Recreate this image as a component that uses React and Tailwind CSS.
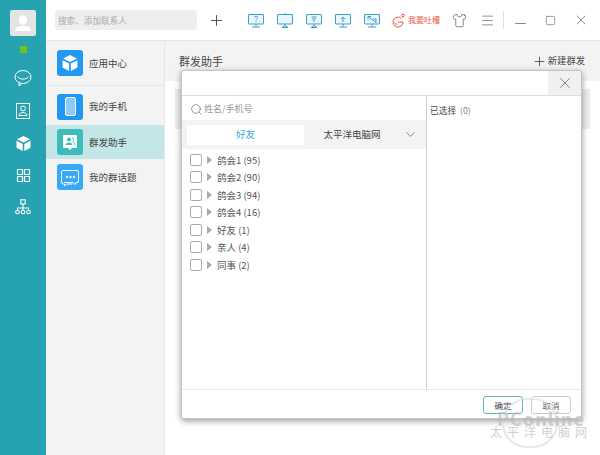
import React from 'react';
import { Plus, Search, ChevronDown, X, Minus, Square, Menu, Shirt } from 'lucide-react';

const font = { fontFamily: '"Noto Sans CJK SC", "Liberation Sans", sans-serif' };

const Monitor = ({ children, plain }) => (
  <svg width="16" height="15" viewBox="0 0 16 15" fill="none" stroke="#3a9fc6" strokeWidth="1">
    <rect x="0.500" y="1.500" width="15" height="9.500" rx="0.500" fill="#eaf6fb" />
    {plain ? null : <path d="M8 11v3M4 14h8" />}
    {children}
  </svg>
);

const toolIcons = [
  <Monitor key="a"><path d="M6.500 4.500c0-1.800 3-1.800 3 0 0 1.200-1.500 1.200-1.500 2.500M8 8v1" /></Monitor>,
  <Monitor key="b" plain><path d="M8 0v1.500M8 11v2M5 14.500l3-2 3 2z" /></Monitor>,
  <Monitor key="c" plain><path d="M5.500 4h5M6 6h4M7 8h2M8 11v2M5 14.500l3-2 3 2z" /></Monitor>,
  <Monitor key="d"><path d="M8 9V4M6 6l2-2 2 2" /></Monitor>,
  <Monitor key="e"><path d="M4 3.500l8 6M4 3.500h3M4 3.500v3M9 6h3v3.500" /></Monitor>,
];

const groups = ['鸽会1 (95)', '鸽会2 (90)', '鸽会3 (94)', '鸽会4 (16)', '好友 (1)', '亲人 (4)', '同事 (2)'];

// the cube used in the rail and in the app center tile
const Cube = ({ size = 17 }) => (
  <svg width={size} height={size} viewBox="0 0 17 17" fill="white">
    <path d="M8.500 1 15 4.300 8.500 7.600 2 4.300z" />
    <path d="M1.500 5.800 7.700 9v7L1.500 12.800z" />
    <path d="M15.500 5.800 9.300 9v7l6.200-3.200z" />
  </svg>
);

const App = () => {
  return (
    <div className="w-[600px] h-[455px] flex relative overflow-hidden bg-white" style={font}>
      <aside className="w-[46px] bg-[#26a2b1] flex flex-col items-center shrink-0 pt-[10px]">
        <div className="w-[26px] h-[26px] bg-[#e4e4e4] rounded-[2px] flex items-center justify-center">
          <svg width="20" height="20" viewBox="0 0 20 20" fill="white">
            <ellipse cx="10" cy="7" rx="4" ry="4.800" />
            <path d="M2 18c0-4 4-5 8-5s8 1 8 5z" />
          </svg>
        </div>
        <div className="w-[7px] h-[7px] bg-[#6fc41c] mt-[10px]"></div>
        <div className="mt-[16px] flex flex-col items-center gap-[16px] text-white">
          <svg width="18" height="18" viewBox="0 0 18 18" fill="none" stroke="white" strokeWidth="1">
            <ellipse cx="9" cy="8" rx="8" ry="6.500" />
            <path d="M3.500 7.500c2 3.500 9 3.500 11 0M5 14v3l3-2.500" />
          </svg>
          <svg width="16" height="16" viewBox="0 0 16 16" fill="none" stroke="white" strokeWidth="1">
            <rect x="1.500" y="0.500" width="13" height="15" />
            <circle cx="8" cy="5.500" r="2.400" />
            <path d="M4 12.500c0-4 8-4 8 0z" />
          </svg>
          <Cube />
          <svg width="15" height="15" viewBox="0 0 15 15" fill="none" stroke="white" strokeWidth="1.200">
            <rect x="1.500" y="1.500" width="5" height="5" rx="0.500" />
            <rect x="8.500" y="1.500" width="5" height="5" rx="0.500" />
            <rect x="1.500" y="8.500" width="5" height="5" rx="0.500" />
            <rect x="8.500" y="8.500" width="5" height="5" rx="0.500" />
          </svg>
          <svg width="16" height="16" viewBox="0 0 16 16" fill="none" stroke="white" strokeWidth="1.100">
            <rect x="5.800" y="0.800" width="4.400" height="4.200" />
            <path d="M8 5v4M2.500 11V9h11v2M8 9v2" />
            <circle cx="2.500" cy="13" r="1.800" />
            <circle cx="8" cy="13" r="1.800" />
            <circle cx="13.500" cy="13" r="1.800" />
          </svg>
        </div>
      </aside>

      <div className="flex-1 flex flex-col min-w-0">
        <header className="h-[41px] flex items-center border-b border-[#e4e4e4] shrink-0">
          <div className="w-[142px] h-[20px] ml-[9px] bg-[#eeeeee] rounded-[2px] text-[8.600px] text-[#aaa] flex items-center pl-[3px] shrink-0">搜索、添加联系人</div>
          <Plus size={17} strokeWidth={1.300} className="ml-[11px] text-[#444] shrink-0" />
          <div className="flex items-center gap-[13px] ml-[23px] shrink-0">{toolIcons}</div>
          <svg width="14" height="15" viewBox="0 0 14 15" fill="none" stroke="#e8583f" strokeWidth="1" className="ml-[11px] shrink-0">
            <path d="M10.500 5.500a5 5 0 1 0 1.500 3.500H7" />
            <path d="M3.500 9.500c.5 1.500 2 2 3 1.500" />
            <circle cx="12" cy="2.500" r="1.400" />
          </svg>
          <span className="ml-[3px] text-[8px] text-[#e8583f] shrink-0">我要吐槽</span>
          <Shirt size={15} strokeWidth={1.100} className="ml-[12px] text-[#555] shrink-0" />
          <Menu size={15} strokeWidth={1} className="ml-[13px] text-[#555] shrink-0" />
          <div className="w-px h-[18px] bg-[#e0e0e0] ml-[8px] shrink-0"></div>
          <Minus size={17} strokeWidth={1} className="ml-[8px] mt-[6px] text-[#555] shrink-0" />
          <Square size={11} strokeWidth={1.200} className="ml-[16px] text-[#555] shrink-0" />
          <X size={16} strokeWidth={1} className="ml-[17px] text-[#555] shrink-0" />
        </header>

        <div className="flex-1 flex min-h-0">
          <nav className="w-[119px] bg-[#f3f3f3] border-r border-[#e6e6e6] shrink-0 text-[9.500px] text-[#444]">
            <div className="h-[45px] flex items-center pl-[11px] gap-[6px] border-b border-[#e6e6e6]">
              <div className="w-[26px] h-[26px] rounded-[3px] bg-[#2199f2] flex items-center justify-center">
                <Cube size={18} />
              </div>
              <span>应用中心</span>
            </div>
            <div className="h-[37px] mt-[2px] flex items-center pl-[11px] gap-[6px]">
              <div className="w-[26px] h-[26px] rounded-[3px] bg-[#2199f2] flex items-center justify-center">
                <div className="w-[11px] h-[19px] border border-white rounded-[2px] bg-[#8ccaf7]"></div>
              </div>
              <span>我的手机</span>
            </div>
            <div className="h-[34px] flex items-center pl-[11px] gap-[6px] bg-[#c2e7e6]">
              <div className="w-[26px] h-[26px] rounded-[3px] bg-[#3dbcbc] flex items-center justify-center">
                <svg width="16" height="17" viewBox="0 0 16 17">
                  <path d="M1 2a1 1 0 0 1 1-1h12a1 1 0 0 1 1 1v11a1 1 0 0 1-1 1h-4l-2 2-2-2H2a1 1 0 0 1-1-1z" fill="white" />
                  <circle cx="7" cy="5.500" r="2" fill="#3dbcbc" />
                  <path d="M3.500 11c0-3.500 7-3.500 7 0z" fill="#3dbcbc" />
                  <path d="M10 4c2 0 2 3 .5 3.500M11 8c1.500.5 2 1.500 2 3" stroke="#3dbcbc" fill="none" />
                </svg>
              </div>
              <span>群发助手</span>
            </div>
            <div className="h-[36px] flex items-center pl-[11px] gap-[6px]">
              <div className="w-[26px] h-[26px] rounded-[3px] bg-[#36a9f7] flex items-center justify-center">
                <svg width="20" height="19" viewBox="0 0 20 19" fill="none" stroke="white">
                  <path d="M4 2.500h13a1.500 1.500 0 0 1 1.500 1.500v9a1.500 1.500 0 0 1-1.500 1.500h-1l-1 2-2-2H4" />
                  <path d="M4 2.500A2 2 0 0 0 1.500 5v9a2 2 0 0 0 2 2h1v2l2-2h6" />
                  <circle cx="7" cy="9" r=".8" fill="white" />
                  <circle cx="10.500" cy="9" r=".8" fill="white" />
                  <circle cx="14" cy="9" r=".8" fill="white" />
                </svg>
              </div>
              <span>我的群话题</span>
            </div>
          </nav>

          <main className="flex-1 flex flex-col min-w-0">
            <div className="h-[40px] bg-[#f3f3f3] flex items-center justify-between pl-[14px] pr-[15px] text-[11px] text-[#444] shrink-0">
              <span>群发助手</span>
              <div className="flex items-center gap-[1px] text-[9.300px]">
                <Plus size={15} strokeWidth={1.300} />
                <span>新建群发</span>
              </div>
            </div>
            <div className="h-[40px] mt-[8px] mx-[10px] bg-[#ececec]"></div>
          </main>
        </div>
      </div>

      <div className="absolute left-[181px] top-[70px] w-[401px] h-[349px] bg-white border border-[#c4c4c4] rounded-[3px] shadow-[0_2px_6px_rgba(0,0,0,0.4)] flex flex-col text-[#555]">
        <div className="h-[25px] flex justify-end border-b border-[#dedede] shrink-0">
          <div className="w-[33px] bg-[#f0f0f0] flex items-center justify-center rounded-tr-[3px]">
            <X size={18} strokeWidth={0.900} className="text-[#555]" />
          </div>
        </div>
        <div className="flex-1 flex min-h-0">
          <div className="w-[245px] border-r border-[#cfcfcf] flex flex-col shrink-0">
            <div className="h-[24px] pt-[2px] flex items-center pl-[8px] text-[9px] text-[#999] shrink-0">
              <Search size={13} strokeWidth={1.200} className="text-[#666]" />
              <span className="ml-[1px]">姓名/手机号</span>
            </div>
            <div className="h-[29px] bg-[#f3f3f3] flex items-center shrink-0 text-[9.500px]">
              <div className="w-[117px] h-[20px] ml-[5px] bg-white text-[#3aa9e0] flex items-center justify-center">好友</div>
              <div className="w-[86px] text-center text-[#444] ml-[5px]">太平洋电脑网</div>
              <ChevronDown size={15} strokeWidth={1.100} className="ml-[8px] text-[#555]" />
            </div>
            <ul className="pt-[2px]">
              {groups.map((g) => (
                <li key={g} className="h-[17.500px] flex items-center pl-[8px] text-[9.500px] text-[#555]">
                  <span className="w-[12px] h-[12px] border border-[#aaa] rounded-[2px] bg-white"></span>
                  <span className="ml-[5px] w-0 h-0 border-y-[4px] border-y-transparent border-l-[5px] border-l-[#aaa]"></span>
                  <span className="ml-[5px]">{g}</span>
                </li>
              ))}
            </ul>
          </div>
          <div className="flex-1 pl-[3px] pt-[8px] text-[8.700px]">
            <span className="text-[#444]">已选择</span>
            <span className="ml-[4px] text-[#888]">(0)</span>
          </div>
        </div>
        <div className="h-[29px] border-t border-[#e8e8e8] flex items-center justify-end pr-[10px] gap-[8px] pt-[2px] shrink-0 text-[8.500px]">
          <button className="w-[40px] h-[18px] border border-[#5fb8b8] rounded-[3px] text-[#444]">确定</button>
          <button className="w-[40px] h-[18px] border border-[#ccc] rounded-[3px] text-[#666]">取消</button>
        </div>
      </div>

      {/* site watermark over the corner */}
      <div className="absolute left-[488px] top-[412px] w-[106px] flex flex-col items-center pointer-events-none">
        <div className="absolute left-[14px] top-[-14px] w-[56px] h-[50px] rounded-full border-2 border-[#d8d8d8]/60"></div>
        <span className="relative text-[18px] leading-[13px] font-bold text-[#bbbbbb]/70 tracking-[1px]">PConline</span>
        <span className="relative text-[12px] leading-[14px] text-[#c4c4c4]/80 tracking-[5px]">太平洋电脑网</span>
      </div>
    </div>
  );
};

export default App;
